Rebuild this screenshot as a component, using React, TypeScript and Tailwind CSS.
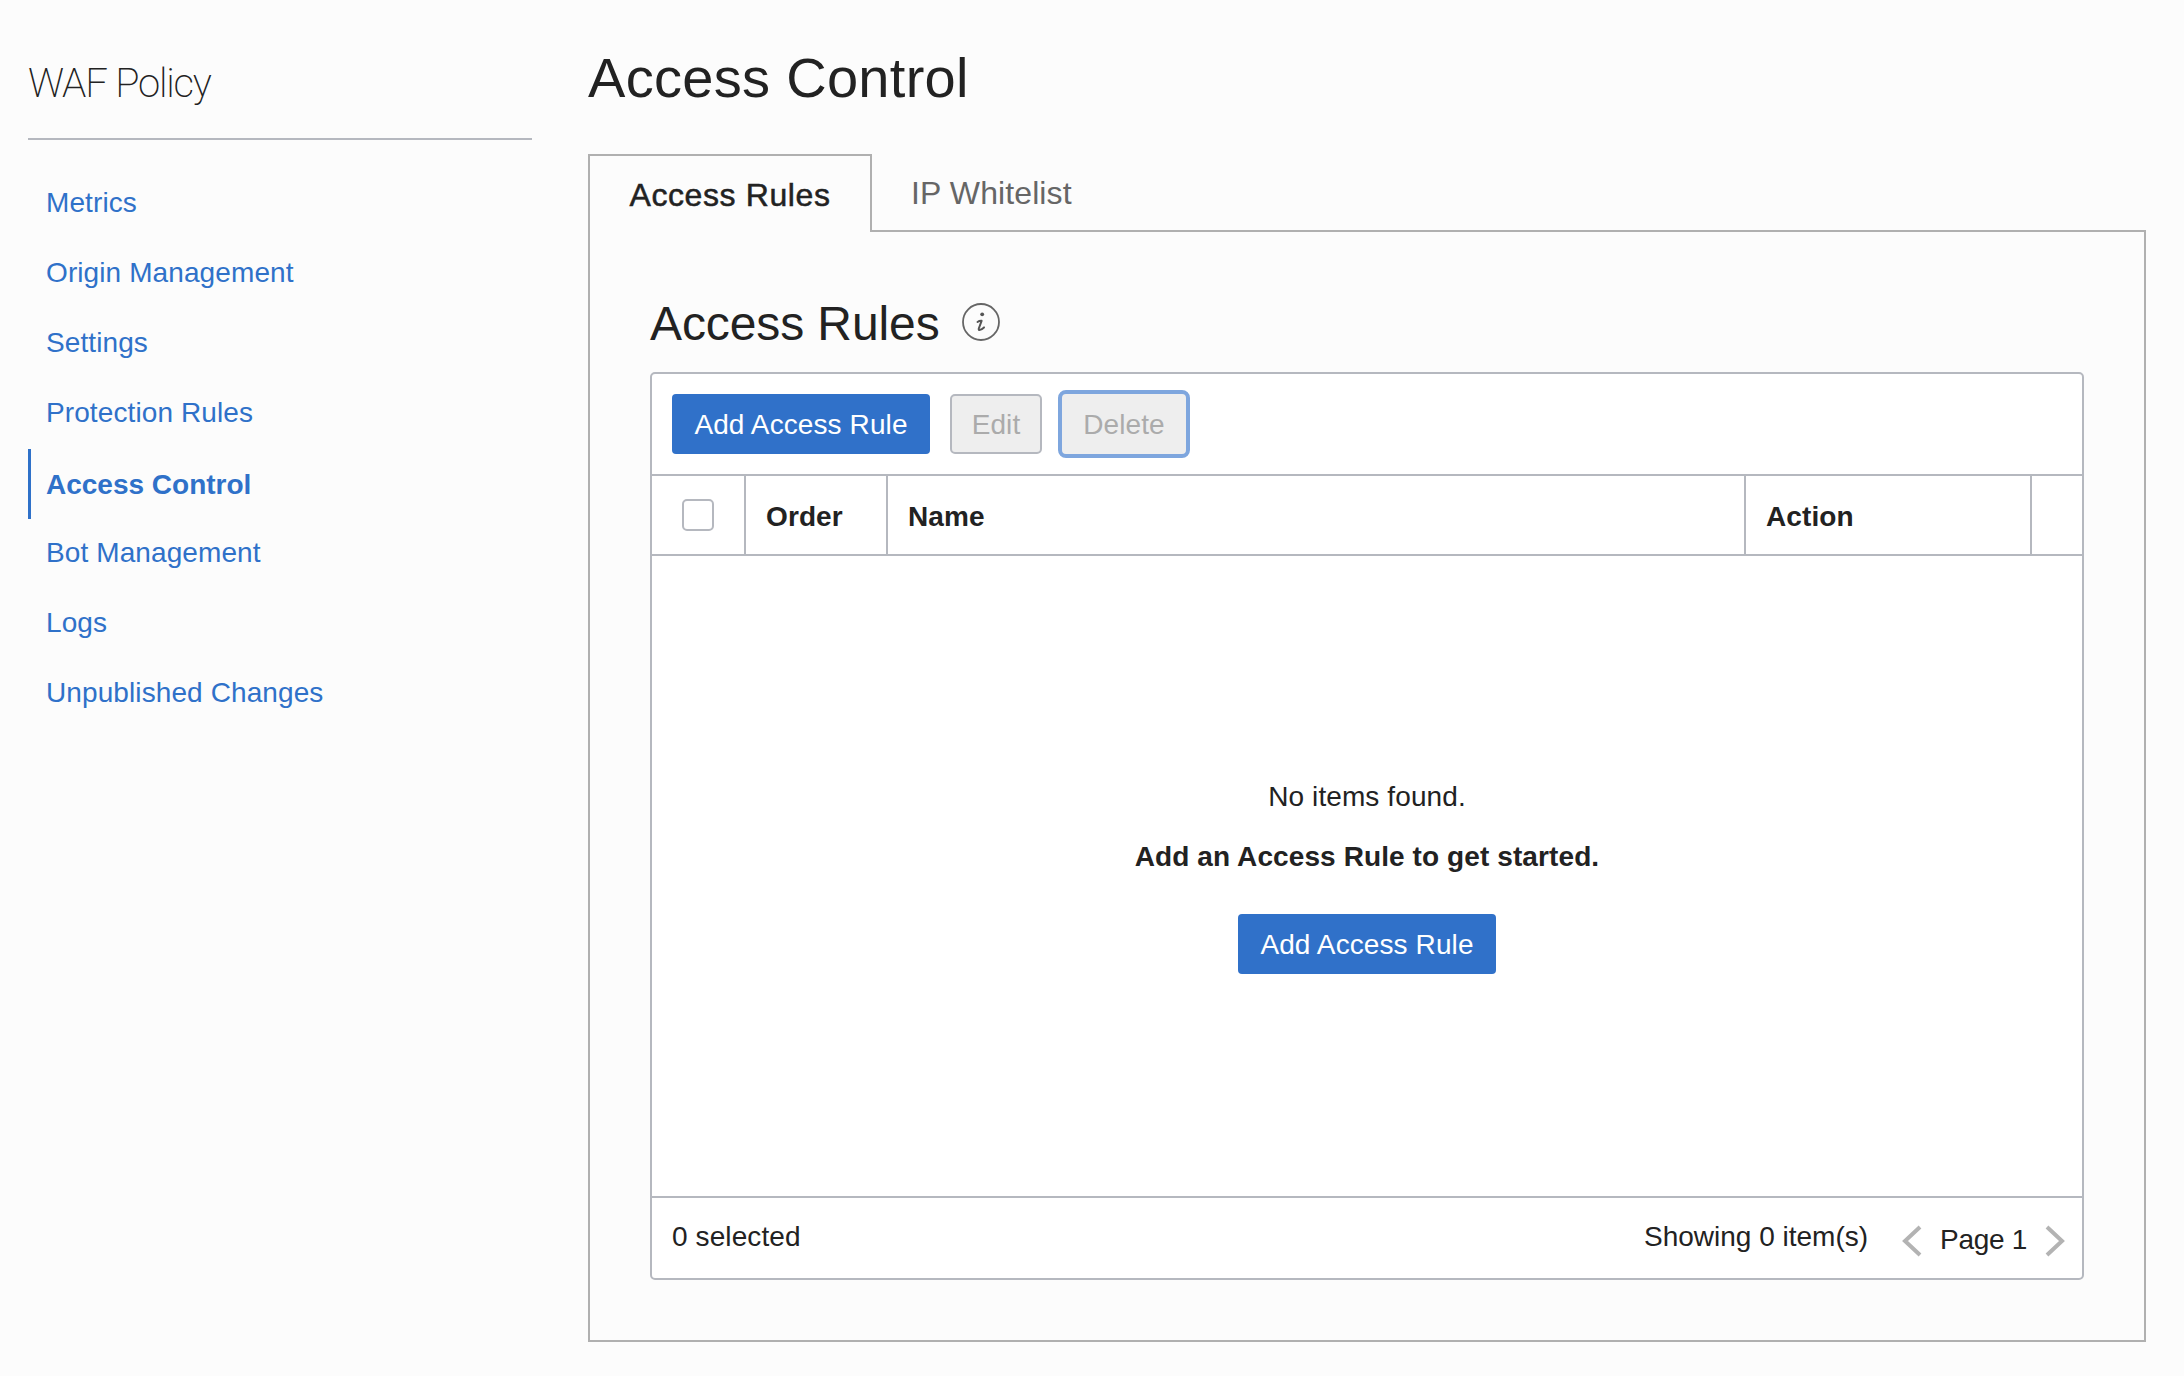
const navItems = [
  "Metrics",
  "Origin Management",
  "Settings",
  "Protection Rules",
  "Access Control",
  "Bot Management",
  "Logs",
  "Unpublished Changes",
];

function Sidebar() {
  return (
    <aside className="w-[504px] shrink-0 pt-[59px]">
      <h2 className="h-[79px] pt-[1px] font-['Roboto',sans-serif] text-[40px] leading-[48px] font-extralight tracking-[-1.2px] text-[#222222]">WAF Policy</h2>
      <div className="h-[2px] bg-[#b5b8bf]" />
      <nav className="mt-[28px] flex flex-col">
        {navItems.map((item) =>
          item === "Access Control" ? (
            <a key={item} className="h-[70px] flex items-center pt-[2px] pl-[15px] border-l-[3px] border-[#2f71c9] text-[28px] font-bold tracking-normal text-[#2f71c9] mt-[1px] -mb-[1px]">
              {item}
            </a>
          ) : (
            <a key={item} className="h-[70px] flex items-center pl-[18px] text-[28px] text-[#2f71c9]">
              {item}
            </a>
          )
        )}
      </nav>
    </aside>
  );
}

function PrimaryButton() {
  return (
    <button className="h-[60px] w-[258px] pt-[2px] rounded-[4px] bg-[#3071c9] text-[28px] text-white">
      Add Access Rule
    </button>
  );
}

function InfoIcon() {
  return (
    <svg width="38" height="38" viewBox="0 0 38 38" fill="none" className="ml-[22px] -mt-[4px]">
      <circle cx="19" cy="19" r="18" stroke="#666666" strokeWidth="1.8" />
      <path d="M15.5 19 Q17.5 17.6 19.6 17.8 L16.8 25.5 Q16.4 27.4 18 26.9 Q19.8 26.3 22 24.4" stroke="#555555" strokeWidth="2" strokeLinecap="round" strokeLinejoin="round" />
      <circle cx="20.2" cy="11.3" r="1.9" fill="#555555" />
    </svg>
  );
}

function Chevron({ dir }: { dir: "left" | "right" }) {
  return (
    <svg width="20" height="32" viewBox="0 0 20 32" fill="none">
      <path d={dir === "left" ? "M18 2 L3 16 L18 30" : "M2 2 L17 16 L2 30"} stroke="#b3b3b3" strokeWidth="4" />
    </svg>
  );
}

function AccessRulesTable() {
  return (
    <div className="mt-[19px] h-[908px] flex flex-col rounded-[5px] border-2 border-[#b5b8bf] bg-white">
      <div className="h-[102px] flex items-center pl-[20px] border-b-2 border-[#b5b8bf]">
        <PrimaryButton />
        <button className="ml-[20px] h-[60px] w-[92px] pt-[2px] rounded-[5px] border-2 border-[#b5b8bf] bg-[#eeeeee] text-[28px] text-[#ababab]">
          Edit
        </button>
        <button className="ml-[16px] h-[68px] w-[132px] pt-[2px] rounded-[8px] border-4 border-[#7ea6de] bg-[#eeeeee] text-[28px] text-[#ababab]">
          Delete
        </button>
      </div>
      <div className="h-[80px] flex border-b-2 border-[#b5b8bf] text-[28px] font-bold text-[#222222]">
        <div className="w-[94px] flex items-center justify-center border-r-2 border-[#b5b8bf]">
          <div className="w-[32px] h-[32px] rounded-[5px] border-2 border-[#b5b8bf] bg-white" />
        </div>
        <div className="w-[142px] flex items-center pl-[20px] pt-[4px] border-r-2 border-[#b5b8bf]">Order</div>
        <div className="w-[858px] flex items-center pl-[20px] pt-[4px] border-r-2 border-[#b5b8bf]">Name</div>
        <div className="w-[286px] flex items-center pl-[20px] pt-[4px] border-r-2 border-[#b5b8bf]">Action</div>
        <div className="flex-1" />
      </div>
      <div className="flex-1 flex flex-col items-center text-[28px] text-[#222222]">
        <p className="mt-[221px] leading-[40px]">No items found.</p>
        <p className="mt-[20px] leading-[40px] font-bold">Add an Access Rule to get started.</p>
        <div className="mt-[37px]">
          <PrimaryButton />
        </div>
      </div>
      <div className="h-[82px] flex items-center pl-[20px] pr-[17px] border-t-2 border-[#b5b8bf] text-[28px] text-[#222222]">
        <span className="-mt-[3px]">0 selected</span>
        <span className="ml-auto -mt-[3px] tracking-normal">Showing 0 item(s)</span>
        <span className="ml-[34px] mt-[6px] flex items-center">
          <Chevron dir="left" />
          <span className="mx-[18px] -mt-[2px] tracking-[-0.3px]">Page 1</span>
          <Chevron dir="right" />
        </span>
      </div>
    </div>
  );
}

export default function App() {
  return (
    <div className="min-h-screen h-[1376px] bg-[#fcfcfc] flex pl-[28px] pr-[38px] tracking-[0.1px] font-['Liberation_Sans',Arial,sans-serif]">
      <Sidebar />
      <main className="ml-[56px] flex-1 min-w-0">
        <h1 className="h-[154px] pt-[45px] text-[56px] leading-[66px] tracking-[0.3px] text-[#222222]">Access Control</h1>
        <div className="flex h-[78px]">
          <div className="w-[284px] pt-[2px] flex items-center justify-center border-2 border-b-0 border-[#b0b0b0] bg-[#fcfcfc] text-[32px] tracking-[0.6px] [-webkit-text-stroke:0.5px_#222222] text-[#222222]">
            Access Rules
          </div>
          <div className="flex-1 flex items-center pl-[39px] pt-[1px] border-b-2 border-[#b0b0b0] text-[32px] text-[#666666]">
            IP Whitelist
          </div>
        </div>
        <div className="h-[1110px] border-2 border-t-0 border-[#b0b0b0] px-[60px] pt-[63px]">
          <div className="flex items-center h-[58px]">
            <h2 className="text-[48px] leading-[58px] tracking-[-0.1px] text-[#222222]">Access Rules</h2>
            <InfoIcon />
          </div>
          <AccessRulesTable />
        </div>
      </main>
    </div>
  );
}
